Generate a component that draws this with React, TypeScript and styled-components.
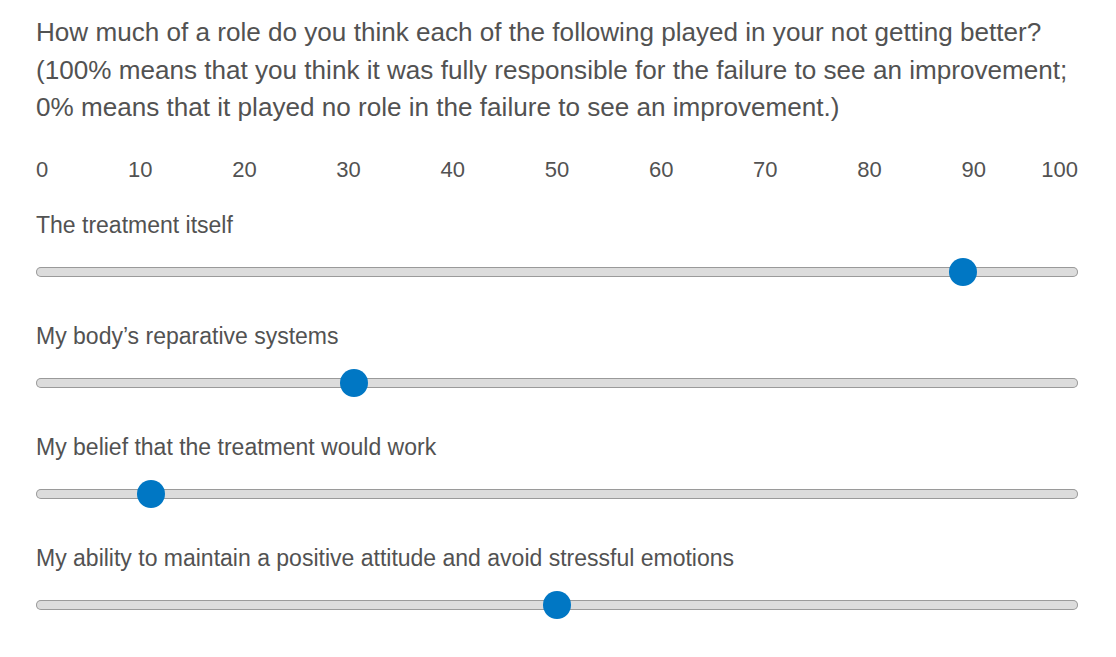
import React from 'react';
import styled, { createGlobalStyle } from 'styled-components';

const GlobalStyle = createGlobalStyle`
  html, body {
    margin: 0;
    padding: 0;
    background: #ffffff;
  }
  body {
    font-family: "Liberation Sans", Arial, Helvetica, sans-serif;
    color: #525252;
  }
`

const scale = [0, 10, 20, 30, 40, 50, 60, 70, 80, 90, 100]

const items = [
  { id: 1, label: 'The treatment itself', value: 90 },
  { id: 2, label: 'My body’s reparative systems', value: 30 },
  { id: 3, label: 'My belief that the treatment would work', value: 10 },
  { id: 4, label: 'My ability to maintain a positive attitude and avoid stressful emotions', value: 50 },
]

const App = () => {
  return (
    <>
      <GlobalStyle />
      <Page>
        <Question>
          How much of a role do you think each of the following played in your not getting better?
          <br />
          (100% means that you think it was fully responsible for the failure to see an improvement;
          <br />
          0% means that it played no role in the failure to see an improvement.)
        </Question>
        <ScaleRow>
          {scale.map((n, i) => (
            <Tick key={n} align={i === 0 ? 'start' : i === scale.length - 1 ? 'end' : 'center'}>
              {n}
            </Tick>
          ))}
        </ScaleRow>
        {items.map(item => (
          <SliderBlock key={item.id}>
            <Label htmlFor={'s' + item.id}>{item.label}</Label>
            <Range id={'s' + item.id} type='range' min={0} max={100} defaultValue={item.value} />
          </SliderBlock>
        ))}
      </Page>
    </>
  )
}

export default App;

const Page = styled.div`
  width: 1042px;
  padding: 14px 38px 0 36px;
  display: flex;
  flex-direction: column;
`
const Question = styled.p`
  margin: 0;
  font-size: 26.1px;
  line-height: 37.5px;
  white-space: nowrap;
`
const ScaleRow = styled.div`
  display: grid;
  grid-template-columns: 5% repeat(9, 10%) 5%;
  margin-top: 30px;
  font-size: 22px;
  line-height: 26px;
`
const Tick = styled.span<{ align: string }>`
  justify-self: ${props => props.align};
  white-space: nowrap;
  ${props => props.align === 'center' ? 'display: flex; justify-content: center; width: 0; overflow: visible;' : ''}
`
const SliderBlock = styled.div`
  display: flex;
  flex-direction: column;
  gap: 20px;
  margin-top: 29px;
  & + & {
    margin-top: 37px;
  }
`
const Label = styled.label`
  font-size: 23px;
  line-height: 26px;
`
const Range = styled.input`
  -webkit-appearance: none;
  appearance: none;
  width: 100%;
  height: 28px;
  margin: 0;
  padding: 0;
  background: transparent;
  outline: none;

  &::-webkit-slider-runnable-track {
    height: 10px;
    background: #dcdcdc;
    box-shadow: inset 0 0 0 1px #9a9a9a;
    border-radius: 5px;
  }
  &::-webkit-slider-thumb {
    -webkit-appearance: none;
    appearance: none;
    width: 28px;
    height: 28px;
    margin-top: -9px;
    border-radius: 50%;
    background: #0077c4;
    border: none;
  }
`
